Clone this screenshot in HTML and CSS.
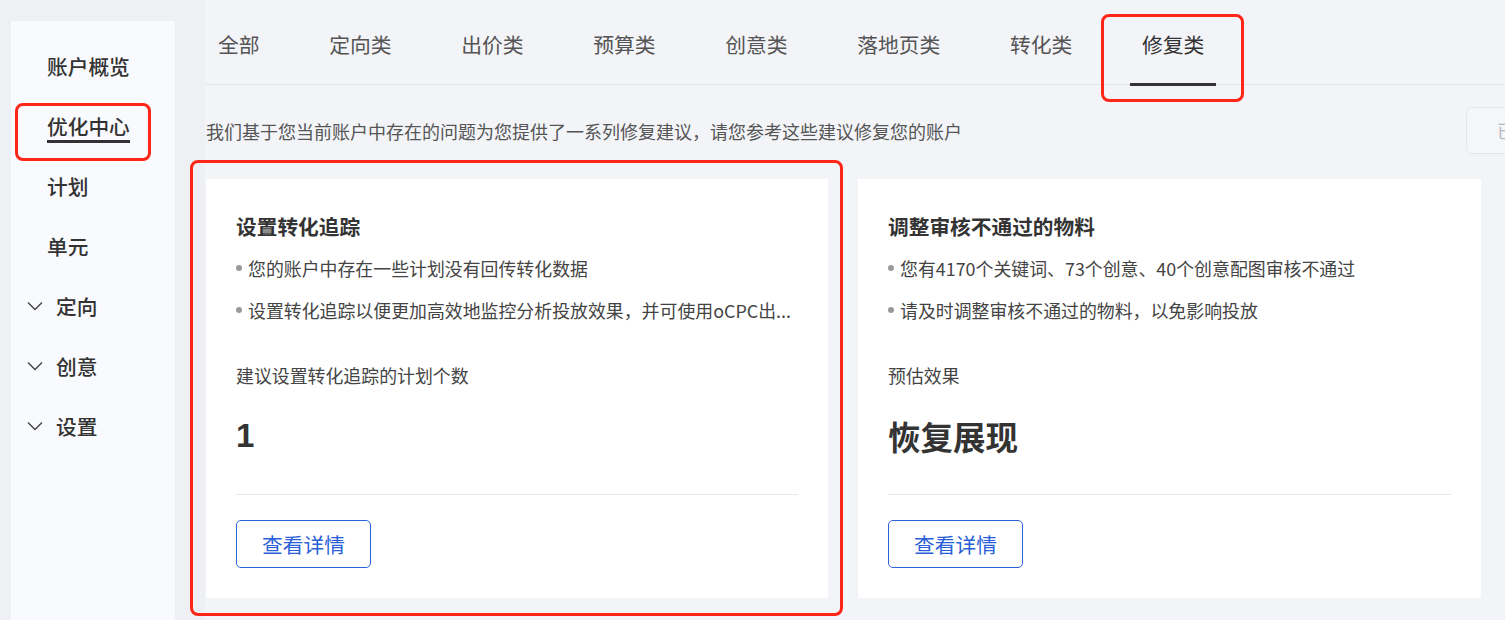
FILE: index.html
```html
<!DOCTYPE html>
<html lang="zh-CN">
<head>
<meta charset="utf-8">
<title>优化中心</title>
<link rel="stylesheet" href="styles.css">
</head>
<body>
<div class="page">
  <aside class="sidebar">
    <div class="nav-item">账户概览</div>
    <div class="nav-item active"><span class="nav-label">优化中心</span><span class="mark mark-nav"></span></div>
    <div class="nav-item">计划</div>
    <div class="nav-item">单元</div>
    <div class="nav-item group"><svg class="chev" viewBox="0 0 16 10" width="16" height="10"><path d="M1 1.5 L8 8.5 L15 1.5" fill="none" stroke="#444" stroke-width="1.4"/></svg><span>定向</span></div>
    <div class="nav-item group"><svg class="chev" viewBox="0 0 16 10" width="16" height="10"><path d="M1 1.5 L8 8.5 L15 1.5" fill="none" stroke="#444" stroke-width="1.4"/></svg><span>创意</span></div>
    <div class="nav-item group"><svg class="chev" viewBox="0 0 16 10" width="16" height="10"><path d="M1 1.5 L8 8.5 L15 1.5" fill="none" stroke="#444" stroke-width="1.4"/></svg><span>设置</span></div>
  </aside>
  <main class="main">
    <div class="tabbar">
      <div class="tabs">
        <div class="tab">全部</div>
        <div class="tab">定向类</div>
        <div class="tab">出价类</div>
        <div class="tab">预算类</div>
        <div class="tab">创意类</div>
        <div class="tab">落地页类</div>
        <div class="tab">转化类</div>
        <div class="tab active">修复类<span class="mark mark-tab"></span></div>
      </div>
    </div>
    <div class="desc-row">
      <p class="desc">我们基于您当前账户中存在的问题为您提供了一系列修复建议，请您参考这些建议修复您的账户</p>
      <button class="ghost-btn">已忽略</button>
    </div>
    <div class="cards">
      <section class="card">
        <h3 class="card-title">设置转化追踪</h3>
        <ul class="bullets">
          <li>您的账户中存在一些计划没有回传转化数据</li>
          <li>设置转化追踪以便更加高效地监控分析投放效果，并可使用oCPC出...</li>
        </ul>
        <div class="metric-label">建议设置转化追踪的计划个数</div>
        <div class="metric-value num">1</div>
        <div class="divider"></div>
        <button class="detail-btn">查看详情</button>
        <span class="mark mark-card"></span>
      </section>
      <section class="card">
        <h3 class="card-title">调整审核不通过的物料</h3>
        <ul class="bullets">
          <li>您有4170个关键词、73个创意、40个创意配图审核不通过</li>
          <li>请及时调整审核不通过的物料，以免影响投放</li>
        </ul>
        <div class="metric-label">预估效果</div>
        <div class="metric-value">恢复展现</div>
        <div class="divider"></div>
        <button class="detail-btn">查看详情</button>
      </section>
    </div>
  </main>
</div>
</body>
</html>
```
FILE: styles.css
```css
html, body {
  margin: 0;
  padding: 0;
  overflow: hidden;
}
body {
  background: #eef0f4;
  font-family: "Noto Sans CJK SC", "Noto Sans", sans-serif;
  color: #333;
  width: 1505px;
  height: 620px;
}
.page {
  display: flex;
  height: 620px;
}
.sidebar {
  width: 164px;
  margin-left: 11px;
  margin-top: 21px;
  background: #f9fafd;
  padding-top: 15px;
  box-sizing: border-box;
  flex-shrink: 0;
}
.nav-item {
  position: relative;
  height: 60px;
  line-height: 60px;
  padding-left: 36px;
  font-size: 20.7px;
  font-weight: 500;
  color: #333;
  display: flex;
  align-items: center;
}
.nav-item.active .nav-label {
  position: relative;
}
.nav-item.active .nav-label::after {
  content: "";
  position: absolute;
  left: 0;
  right: 0;
  bottom: 13px;
  height: 3px;
  background: #333;
}
.nav-item.group {
  padding-left: 16px;
}
.chev {
  margin-right: 13px;
  margin-top: -1px;
}
.main {
  flex: 1;
  margin-left: 30px;
  min-width: 0;
  background: #f2f4f8;
}
.tabbar {
  margin-top: 3px;
  border-bottom: 1px solid #e1e3e8;
}
.tabs {
  display: flex;
  gap: 45.6px;
  width: 1057px;
  height: 81px;
  background: #f3f4f8;
  padding-left: 1px;
  box-sizing: border-box;
}
.tab {
  position: relative;
  padding: 0 12px;
  font-size: 20.8px;
  line-height: 82px;
  color: #555;
  white-space: nowrap;
}
.tab.active {
  color: #333;
}
.tab.active::after {
  content: "";
  position: absolute;
  left: 0;
  right: 0;
  bottom: -2px;
  height: 3px;
  background: #333;
}
.desc-row {
  display: flex;
  align-items: center;
  height: 94px;
  margin-right: 24px;
}
.desc {
  margin: 0;
  margin-left: 1px;
  font-size: 18px;
  color: #555;
  line-height: 26px;
  margin-top: -2px;
  white-space: nowrap;
}
.ghost-btn {
  margin-left: auto;
  margin-right: -85px;
  width: 100px;
  height: 47px;
  margin-top: -4px;
  border: 1px solid #e4e6ea;
  background: #f5f6f9;
  border-radius: 6px;
  font-family: inherit;
  font-size: 18px;
  color: #b5b8bf;
  text-align: left;
  padding-left: 30px;
  white-space: nowrap;
  overflow: hidden;
}
.cards {
  display: grid;
  grid-template-columns: 622px 623px;
  gap: 30px;
  margin-left: 1px;
}
.card {
  position: relative;
  background: #fff;
  padding: 33px 30px 31px;
  height: 419px;
  box-sizing: border-box;
}
.card-title {
  margin: 0;
  font-size: 20.7px;
  line-height: 28px;
  font-weight: 600;
  color: #333;
}
.bullets {
  list-style: none;
  margin: 7px 0 0;
  padding: 0;
}
.bullets li {
  position: relative;
  font-size: 17.9px;
  line-height: 42px;
  height: 42px;
  color: #444;
  padding-left: 12px;
  white-space: nowrap;
}
.bullets li::before {
  content: "";
  position: absolute;
  left: 0;
  top: 18px;
  width: 6px;
  height: 6px;
  border-radius: 50%;
  background: #999;
}
.metric-label {
  margin-top: 31px;
  font-size: 17.9px;
  line-height: 26px;
  color: #444;
}
.metric-value {
  margin-top: 26px;
  font-size: 32.5px;
  line-height: 44px;
  height: 44px;
  font-weight: 700;
  color: #333;
}
.metric-value.num {
  font-family: "Liberation Sans", "Noto Sans", sans-serif;
  font-size: 33px;
}
.divider {
  margin-top: 36px;
  height: 1px;
  background: #e6e7ea;
}
.detail-btn {
  display: block;
  margin-top: 25px;
  width: 135px;
  height: 48px;
  border: 1.5px solid #2a63d9;
  border-radius: 5px;
  background: #fff;
  color: #2a5fd8;
  font-family: inherit;
  font-size: 20.7px;
  padding: 0;
}
.mark {
  position: absolute;
  border: 3px solid #ff2617;
  border-radius: 8px;
  pointer-events: none;
  box-sizing: border-box;
}
.mark-nav {
  left: 4px;
  top: 7px;
  width: 136px;
  height: 58px;
}
.mark-tab {
  top: 11px;
  left: -29px;
  width: 143px;
  height: 88px;
}
.mark-card {
  left: -16px;
  top: -19px;
  width: 653px;
  height: 456px;
}
```
